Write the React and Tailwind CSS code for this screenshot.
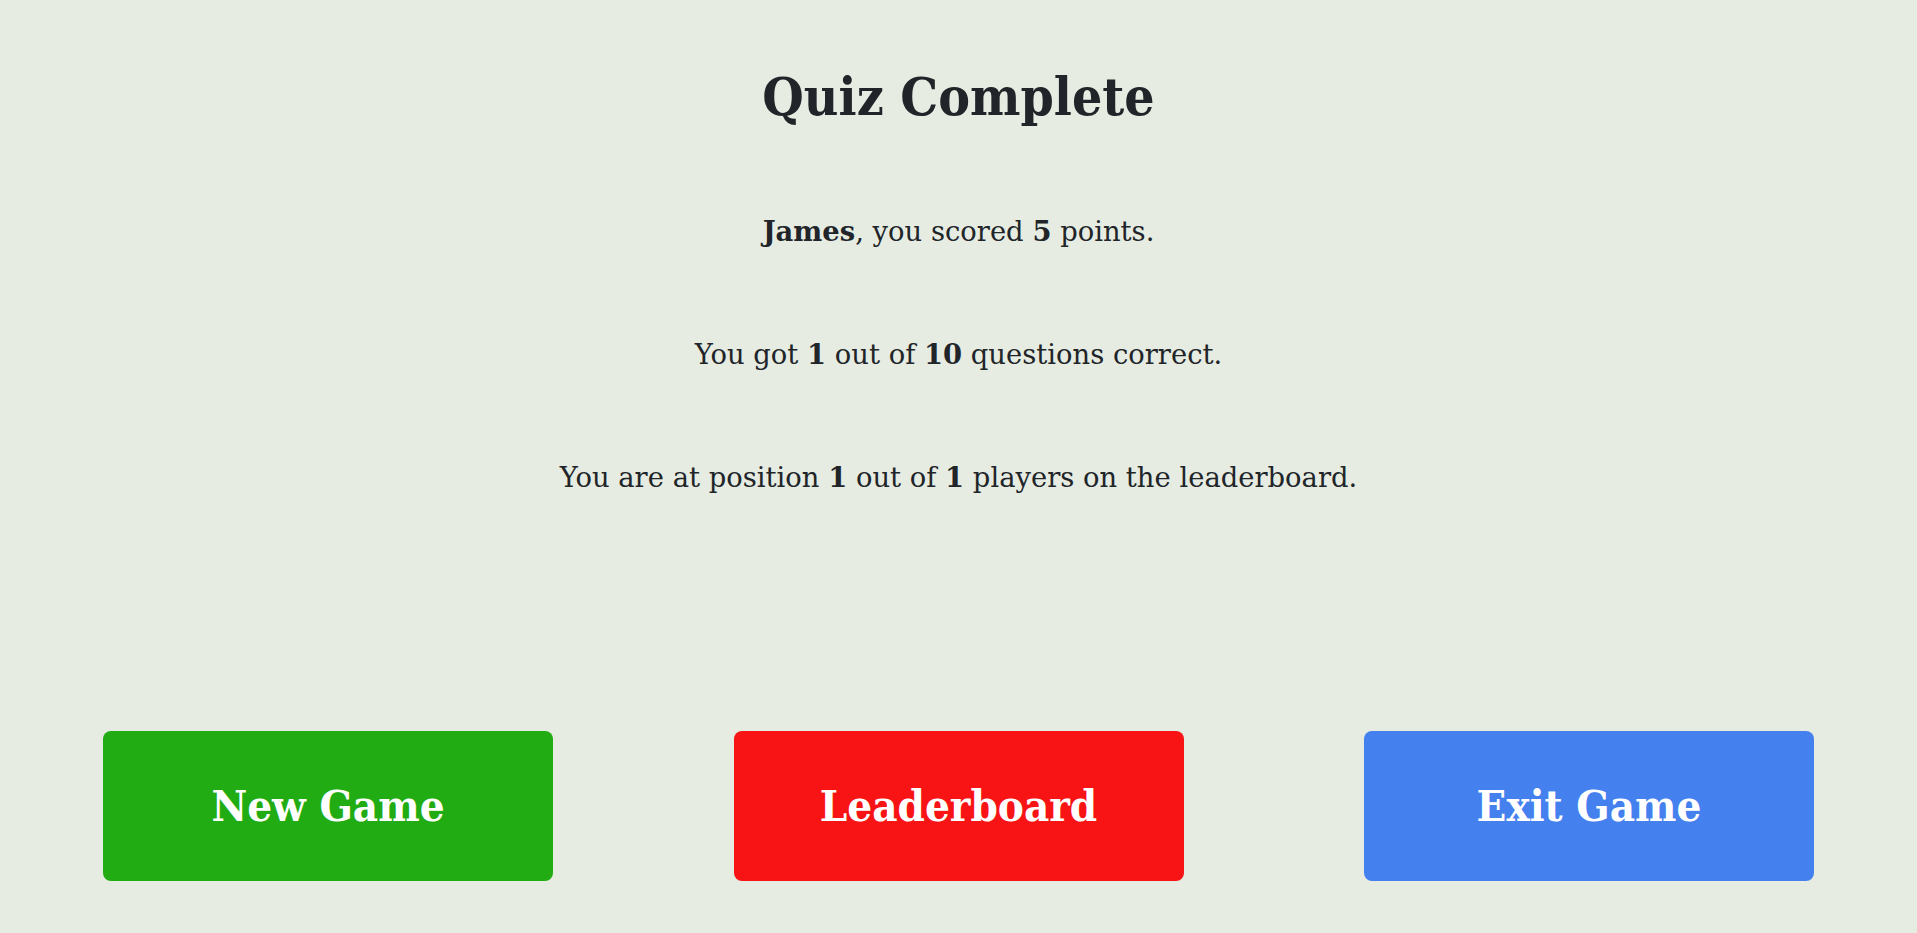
export default function App() {
  const buttons = [
    { label: 'New Game', cls: 'bg-[#22ac14]' },
    { label: 'Leaderboard', cls: 'bg-[#f81414]' },
    { label: 'Exit Game', cls: 'bg-[#4480ee]' },
  ]

  return (
    <div className="min-h-screen bg-[#e6ece2] text-[#212529] font-['DejaVu_Serif',serif] flex flex-col">
      <div className="flex flex-col items-center text-center">
        <h1 className="mt-[56px] text-[53px] leading-[80px] font-bold font-['DejaVu_Serif_Condensed','DejaVu_Serif',serif] font-stretch-condensed">
          Quiz Complete
        </h1>
        <p className="mt-[75px] text-[27.4px] leading-[40px]">
          <b>James</b>, you scored <b>5</b> points.
        </p>
        <p className="mt-[82px] text-[27.4px] leading-[40px]">
          You got <b>1</b> out of <b>10</b> questions correct.
        </p>
        <p className="mt-[82px] text-[27.4px] leading-[40px]">
          You are at position <b>1</b> out of <b>1</b> players on the leaderboard.
        </p>
      </div>

      <div className="mt-[233px] flex justify-between px-[103px]">
        {buttons.map((b) => (
          <button
            key={b.label}
            className={`${b.cls} w-[450px] h-[150px] rounded-lg text-white text-[43.5px] font-bold font-['DejaVu_Serif_Condensed','DejaVu_Serif',serif] font-stretch-condensed`}
          >
            {b.label}
          </button>
        ))}
      </div>
    </div>
  )
}
